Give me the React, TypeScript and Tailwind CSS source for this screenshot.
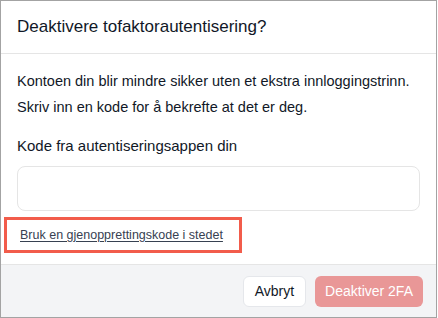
export default function App() {
  return (
    <div className="w-[438px] h-[318px] bg-white" style={{ fontFamily: "'Liberation Sans', Arial, sans-serif" }}>
      <div className="w-[437px] h-[318px] border border-[#a3a3a3] flex flex-col bg-white">
        <div className="h-[53px] shrink-0 border-b border-[#e5e5e5] flex items-center px-4">
          <h2 className="text-[17px] font-medium text-[#111827] whitespace-nowrap">Deaktivere tofaktorautentisering?</h2>
        </div>
        <div className="flex-1 flex flex-col px-4 pt-[14px]">
          <p className="text-[14.5px] leading-[26px] text-[#111827] whitespace-nowrap">
            Kontoen din blir mindre sikker uten et ekstra innloggingstrinn.
            <br />
            Skriv inn en kode for å bekrefte at det er deg.
          </p>
          <label className="mt-[16px] text-[15px] leading-[20px] text-[#111827] whitespace-nowrap">Kode fra autentiseringsappen din</label>
          <input className="mt-[10px] h-[45px] shrink-0 w-full rounded-[8px] border border-[#e5e5e5] outline-none" />
          <div className="mt-[6px] -mx-[13px] h-[36px] shrink-0 border-[3px] border-[#f25c4b] w-[238px] flex items-center px-[13px]">
            <a className="text-[12.5px] text-[#374151] underline underline-offset-2 whitespace-nowrap">Bruk en gjenopprettingskode i stedet</a>
          </div>
        </div>
        <div className="h-[53px] shrink-0 border-t border-[#e5e5e5] bg-[#f3f4f6] flex items-center justify-end gap-[9px] px-[13px]">
          <button className="h-[31px] px-[11px] rounded-[6px] border border-[#e5e7eb] bg-white text-[14px] text-[#111827]">Avbryt</button>
          <button className="h-[31px] px-[10px] rounded-[6px] bg-[#e99797] text-[14px] text-white">Deaktiver 2FA</button>
        </div>
      </div>
    </div>
  );
}
